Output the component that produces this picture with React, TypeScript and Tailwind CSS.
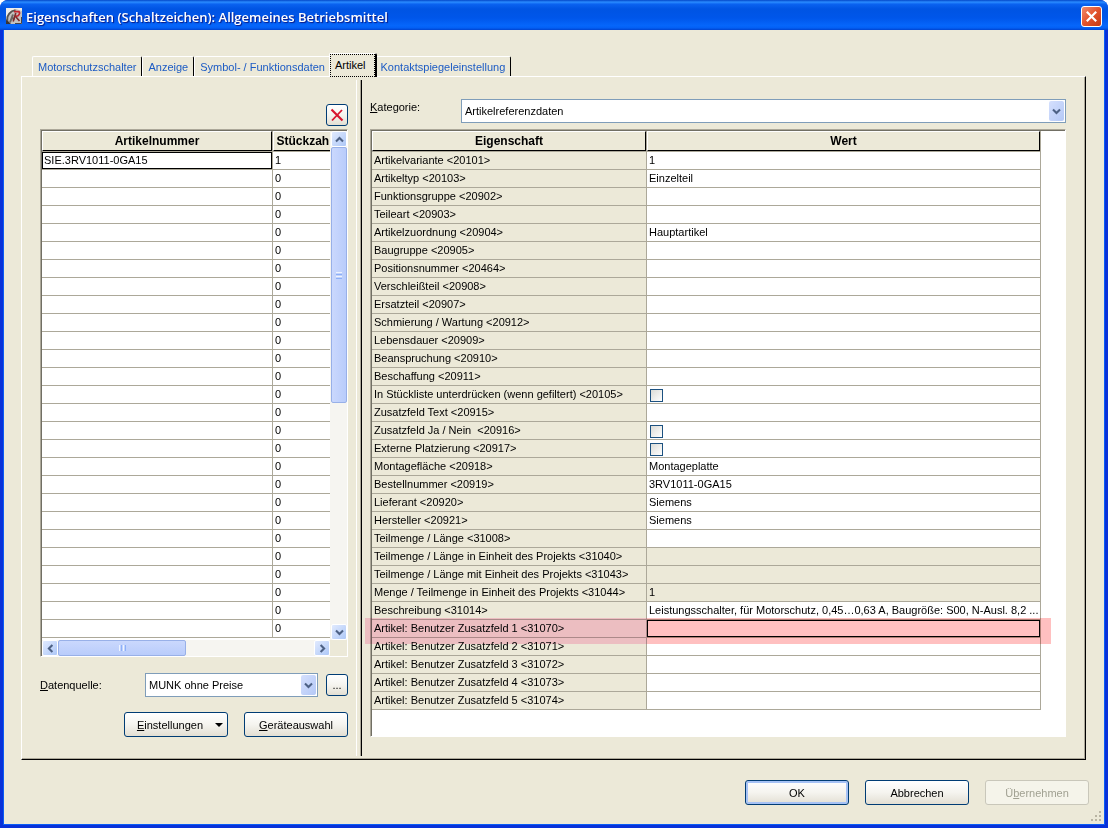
import { useState } from "react";

type Property = {
  label: string;
  value?: string;
  kind?: "check" | "readonly" | "selected";
};

const TABS = [
  "Motorschutzschalter",
  "Anzeige",
  "Symbol- / Funktionsdaten",
  "Artikel",
  "Kontaktspiegeleinstellung",
];

const PROPERTIES: Property[] = [
  { label: "Artikelvariante <20101>", value: "1" },
  { label: "Artikeltyp <20103>", value: "Einzelteil" },
  { label: "Funktionsgruppe <20902>" },
  { label: "Teileart <20903>" },
  { label: "Artikelzuordnung <20904>", value: "Hauptartikel" },
  { label: "Baugruppe <20905>" },
  { label: "Positionsnummer <20464>" },
  { label: "Verschleißteil <20908>" },
  { label: "Ersatzteil <20907>" },
  { label: "Schmierung / Wartung <20912>" },
  { label: "Lebensdauer <20909>" },
  { label: "Beanspruchung <20910>" },
  { label: "Beschaffung <20911>" },
  { label: "In Stückliste unterdrücken (wenn gefiltert) <20105>", kind: "check" },
  { label: "Zusatzfeld Text <20915>" },
  { label: "Zusatzfeld Ja / Nein  <20916>", kind: "check" },
  { label: "Externe Platzierung <20917>", kind: "check" },
  { label: "Montagefläche <20918>", value: "Montageplatte" },
  { label: "Bestellnummer <20919>", value: "3RV1011-0GA15" },
  { label: "Lieferant <20920>", value: "Siemens" },
  { label: "Hersteller <20921>", value: "Siemens" },
  { label: "Teilmenge / Länge <31008>" },
  { label: "Teilmenge / Länge in Einheit des Projekts <31040>", kind: "readonly" },
  { label: "Teilmenge / Länge mit Einheit des Projekts <31043>", kind: "readonly" },
  { label: "Menge / Teilmenge in Einheit des Projekts <31044>", value: "1", kind: "readonly" },
  {
    label: "Beschreibung <31014>",
    value: "Leistungsschalter, für Motorschutz, 0,45…0,63 A, Baugröße: S00, N-Ausl. 8,2 ...",
  },
  { label: "Artikel: Benutzer Zusatzfeld 1 <31070>", kind: "selected" },
  { label: "Artikel: Benutzer Zusatzfeld 2 <31071>" },
  { label: "Artikel: Benutzer Zusatzfeld 3 <31072>" },
  { label: "Artikel: Benutzer Zusatzfeld 4 <31073>" },
  { label: "Artikel: Benutzer Zusatzfeld 5 <31074>" },
];

const ARTICLES = Array.from({ length: 27 }, (_, i) => ({
  number: i === 0 ? "SIE.3RV1011-0GA15" : "",
  count: i === 0 ? "1" : "0",
}));

const BUTTON =
  "rounded-[3px] border border-[#003c74] bg-linear-to-b from-white via-[#f5f4ef] to-[#e3dfd3] text-center";
const SUNKEN =
  "border-t border-l border-t-[#aca899] border-l-[#aca899] border-r border-b border-r-white border-b-white";

function Chevron({ turn }: { turn: string }) {
  return (
    <svg viewBox="0 0 9 9" className={`h-[9px] w-[9px] ${turn}`} aria-hidden="true">
      <path d="M1 2.6 L4.5 6.1 L8 2.6" fill="none" stroke="#4d6185" strokeWidth="2.1" />
    </svg>
  );
}

function ScrollButton({ label, turn }: { label: string; turn: string }) {
  return (
    <button
      type="button"
      aria-label={label}
      className="flex size-4 shrink-0 items-center justify-center rounded-[2px] border border-white bg-linear-to-br from-[#e1eafe] to-[#aec8f7]"
    >
      <Chevron turn={turn} />
    </button>
  );
}

function HeaderCell({ children }: { children: string }) {
  return (
    <th className="border-r border-b border-[#aca899] p-0 text-[12px] font-bold">
      <div className="h-5 border-t border-r border-b border-l border-t-white border-r-black border-b-black border-l-white bg-[#ece9d8] text-center leading-[19px]">
        {children}
      </div>
    </th>
  );
}

function Select({ id, value }: { id: string; value: string }) {
  return (
    <div className="relative min-w-0 flex-1">
      <select
        id={id}
        className="block h-6 w-full appearance-none border border-[#7f9db9] bg-white pl-[3px] text-black outline-none"
      >
        <option>{value}</option>
      </select>
      <span className="pointer-events-none absolute top-0.5 right-0.5 flex h-5 w-[15px] items-center justify-center rounded-[2px] bg-linear-to-br from-[#d5e0fd] to-[#b4c8f6]">
        <Chevron turn="" />
      </span>
    </div>
  );
}

function AppIcon() {
  return (
    <svg viewBox="0 0 16 16" className="size-4" aria-hidden="true">
      <rect width="16" height="16" fill="#c4c1be" />
      <path d="M0 0H16V3L10 1L4 3.5L0 9Z" fill="#efedea" />
      <path d="M0 16V11L3 14L5 16Z" fill="#3a3534" />
      <path d="M1.5 13 C0.5 7 4.5 3 9.5 2.2" fill="none" stroke="#5a5552" strokeWidth="1.8" />
      <path d="M4 14.5 L7 6.5 M5.5 10.5 L9 10.5" fill="none" stroke="#6c6461" strokeWidth="2" />
      <path d="M8 3.6 H13 Q14.6 5.4 12 7.8 L8.5 8.6" fill="none" stroke="#c5232c" strokeWidth="1.6" />
      <path d="M7.2 13.5 L9.8 5 M10 9 L13.5 13" fill="none" stroke="#7c2a2c" strokeWidth="1.6" />
      <path d="M9 15.5 H15.5 V9" fill="none" stroke="#4a4543" strokeWidth="1" />
    </svg>
  );
}

function Tabs({ active, onSelect }: { active: string; onSelect: (tab: string) => void }) {
  return (
    <div role="tablist" className="flex h-6 items-end pl-[11px]">
      {TABS.map((tab) =>
        tab === active ? (
          <button
            key={tab}
            type="button"
            role="tab"
            aria-selected="true"
            className="z-10 -mx-0.5 h-6 rounded-t-[2px] border-t border-r-2 border-l border-t-white border-r-black border-l-white bg-[#ece9d8]"
          >
            <span className="block h-[23px] border border-dotted border-black pr-2 pl-1 leading-[21px]">{tab}</span>
          </button>
        ) : (
          <button
            key={tab}
            type="button"
            role="tab"
            aria-selected="false"
            onClick={() => onSelect(tab)}
            className="h-[21px] rounded-t-[2px] border-t border-r border-l border-t-white border-r-black border-l-white px-[5px] leading-5 text-[#1c5bc4]"
          >
            {tab}
          </button>
        ),
      )}
    </div>
  );
}

function ArticleList() {
  return (
    <div className={SUNKEN}>
      <div className="border-t border-l border-[#716f64]">
        <div className="flex">
          <div className="min-w-0 flex-1 overflow-hidden bg-white pb-0.5">
            <table className="w-[295px] table-fixed border-separate border-spacing-0">
              <colgroup>
                <col className="w-[231px]" />
                <col />
              </colgroup>
              <thead>
                <tr>
                  <HeaderCell>Artikelnummer</HeaderCell>
                  <HeaderCell>Stückzahl</HeaderCell>
                </tr>
              </thead>
              <tbody>
                {ARTICLES.map((article, i) => (
                  <tr key={i}>
                    <td className="h-[18px] border-r border-b border-[#aca899] p-0">
                      <div
                        className={
                          i === 0
                            ? "h-[17px] border border-black pl-px leading-[15px]"
                            : "h-[17px] pl-0.5 leading-[17px]"
                        }
                      >
                        {article.number}
                      </div>
                    </td>
                    <td className="h-[18px] border-r border-b border-[#aca899] p-0 pl-0.5 leading-[17px]">
                      {article.count}
                    </td>
                  </tr>
                ))}
              </tbody>
            </table>
          </div>
          <div className="flex w-[17px] flex-col border-l border-[#f6f5f1] bg-[#f6f5f1]">
            <ScrollButton label="Nach oben" turn="rotate-180" />
            <div className="flex-1">
              <div className="flex h-64 flex-col items-center justify-center gap-px rounded-[2px] border border-[#98b0e8] bg-linear-to-r from-[#cad8fd] to-[#b9ccfb]">
                <span className="h-px w-1.5 bg-[#eef4fe]" />
                <span className="h-px w-1.5 bg-[#8cb0f8]" />
                <span className="h-px w-1.5 bg-[#eef4fe]" />
                <span className="h-px w-1.5 bg-[#8cb0f8]" />
              </div>
            </div>
            <ScrollButton label="Nach unten" turn="" />
          </div>
        </div>
        <div className="flex">
          <div className="flex min-w-0 flex-1 bg-[#f6f5f1]">
            <ScrollButton label="Nach links" turn="rotate-90" />
            <div className="flex-1">
              <div className="flex h-4 w-32 items-center justify-center gap-px rounded-[2px] border border-[#98b0e8] bg-linear-to-b from-[#cad8fd] to-[#b9ccfb]">
                <span className="h-1.5 w-px bg-[#eef4fe]" />
                <span className="h-1.5 w-px bg-[#8cb0f8]" />
                <span className="h-1.5 w-px bg-[#eef4fe]" />
                <span className="h-1.5 w-px bg-[#8cb0f8]" />
              </div>
            </div>
            <ScrollButton label="Nach rechts" turn="-rotate-90" />
          </div>
          <div className="w-[17px]" />
        </div>
      </div>
    </div>
  );
}

function PropertyRow({ property }: { property: Property }) {
  const { label, value, kind } = property;
  const selected = kind === "selected";
  return (
    <tr className={selected ? "relative" : ""}>
      <td className="h-[18px] truncate border-r border-b border-[#aca899] bg-[#ece9d8] p-0 pl-0.5 leading-[17px] whitespace-pre">
        {kind === "check" ? <label htmlFor={label}>{label}</label> : label}
        {selected && (
          <span className="pointer-events-none absolute -top-0.5 -right-2.5 -left-[7px] h-[26px] bg-[linear-gradient(to_right,#ffd0e4_282px,#ffc0c0_282px)] mix-blend-multiply" />
        )}
      </td>
      <td
        className={
          kind === "readonly"
            ? "h-[18px] border-r border-b border-[#aca899] bg-[#ece9d8] p-0"
            : "h-[18px] border-r border-b border-[#aca899] p-0"
        }
      >
        {kind === "check" ? (
          <input
            id={label}
            type="checkbox"
            className="mt-0.5 ml-[3px] block size-[13px] appearance-none border border-[#1c5180] bg-linear-to-br from-[#dcdcd7] to-white"
          />
        ) : (
          <div
            className={
              selected
                ? "h-[17px] border border-black"
                : "h-[17px] truncate pl-0.5 leading-[17px]"
            }
          >
            {value}
          </div>
        )}
      </td>
    </tr>
  );
}

export default function App() {
  const [tab, setTab] = useState("Artikel");
  return (
    <div className="flex min-h-screen flex-col overflow-hidden rounded-t-lg bg-[#0831d9] font-['Liberation_Sans',Arial,sans-serif] text-[11px] leading-[14px] text-black">
      <header className="flex h-[30px] items-center gap-1 bg-[linear-gradient(to_bottom,#0347c8_0%,#2a8bff_7%,#0a62f0_14%,#0054e3_30%,#0056ea_60%,#0566fb_85%,#0360f5_93%,#0043cf_100%)] pt-0.5 pr-1.5 pl-1.5">
        <AppIcon />
        <h1 className="flex-1 pt-0.5 font-['Open_Sans',sans-serif] text-[13px] font-semibold text-white [text-shadow:1px_1px_1px_#0a1883]">
          Eigenschaften (Schaltzeichen): Allgemeines Betriebsmittel
        </h1>
        <button
          type="button"
          aria-label="Schließen"
          className="flex size-[21px] items-center justify-center rounded-[3px] border border-white bg-linear-to-br from-[#f0896a] via-[#e2522c] to-[#c63a12]"
        >
          <svg viewBox="0 0 13 13" className="size-[13px]" aria-hidden="true">
            <path d="M1.8 1.8 L11.2 11.2 M11.2 1.8 L1.8 11.2" stroke="#fff" strokeWidth="2.2" />
          </svg>
        </button>
      </header>

      <main className="mx-[3px] mb-[3px] flex flex-1 flex-col border-r border-b border-l border-[#0a5cf5] bg-[#ece9d8] pt-[23px] pr-[18px] pl-[17px]">
        <Tabs active={tab} onSelect={setTab} />

        <div className="-mt-px flex flex-1 border border-t-white border-r-black border-b-black border-l-white">
          <div className="flex flex-1 border-r border-b border-[#aca899]">
            <section className="flex w-[334px] shrink-0 flex-col pt-[27px] pr-2 pl-[18px]">
              <div className="mb-[3px] flex justify-end">
                <button type="button" aria-label="Löschen" className={`${BUTTON} flex size-[22px] items-center justify-center`}>
                  <svg viewBox="0 0 14 14" className="size-3.5" aria-hidden="true">
                    <path d="M1.5 1.5 L12.5 12.5" stroke="#d8142e" strokeWidth="2.2" />
                    <path d="M12 2 L2 12.5" stroke="#d8142e" strokeWidth="1.8" />
                  </svg>
                </button>
              </div>
              <ArticleList />
              <div className="mt-4 flex items-center">
                <label htmlFor="source" className="w-[105px]">
                  <u>D</u>atenquelle:
                </label>
                <Select id="source" value="MUNK ohne Preise" />
                <button type="button" className={`${BUTTON} ml-2 size-[22px]`}>
                  ...
                </button>
              </div>
              <div className="mt-[15px] flex justify-end gap-4">
                <button type="button" className={`${BUTTON} flex h-[25px] w-[104px] items-center justify-end gap-3 pr-1`}>
                  <span>
                    <u>E</u>instellungen
                  </span>
                  <svg viewBox="0 0 8 4" className="h-1 w-2" aria-hidden="true">
                    <path d="M0 0H8L4 4Z" fill="#000" />
                  </svg>
                </button>
                <button type="button" className={`${BUTTON} h-[25px] w-[104px]`}>
                  <u>G</u>eräteauswahl
                </button>
              </div>
            </section>

            <div className="mt-[3px] mb-0.5 flex w-1.5 shrink-0 justify-end border-r border-l border-r-black border-l-white">
              <div className="w-px bg-[#aca899]" />
            </div>

            <section className="flex min-w-0 flex-1 flex-col pt-[22px] pr-[18px] pb-[21px] pl-2">
              <div className="mb-1.5 flex">
                <label htmlFor="category" className="w-[91px] pt-px">
                  <u>K</u>ategorie:
                </label>
                <Select id="category" value="Artikelreferenzdaten" />
              </div>
              <div className={`${SUNKEN} flex flex-1 flex-col`}>
                <div className="flex-1 border-t border-l border-[#716f64] bg-white pr-6 pb-[26px]">
                  <table className="w-full table-fixed border-separate border-spacing-0">
                    <colgroup>
                      <col className="w-[275px]" />
                      <col />
                    </colgroup>
                    <thead>
                      <tr>
                        <HeaderCell>Eigenschaft</HeaderCell>
                        <HeaderCell>Wert</HeaderCell>
                      </tr>
                    </thead>
                    <tbody>
                      {PROPERTIES.map((property) => (
                        <PropertyRow key={property.label} property={property} />
                      ))}
                    </tbody>
                  </table>
                </div>
              </div>
            </section>
          </div>
        </div>

        <footer className="-mr-[3px] flex justify-end gap-4 pt-5">
          <button type="button" className={`${BUTTON} h-[25px] w-[104px] shadow-[inset_0_0_0_2px_#a6c2f5]`}>
            OK
          </button>
          <button type="button" className={`${BUTTON} h-[25px] w-[104px]`}>
            Abbrechen
          </button>
          <button
            type="button"
            disabled
            className="h-[25px] w-[104px] rounded-[3px] border border-[#c9c7ba] bg-[#f5f4ea] text-[#a1a192]"
          >
            Ü<u>b</u>ernehmen
          </button>
        </footer>
        <div className="-mr-4 flex h-[19px] items-end justify-end pb-0.5">
          <svg viewBox="0 0 12 12" className="size-3" aria-hidden="true">
            <path
              d="M9 1h2v2h-2zM5 5h2v2h-2zM9 5h2v2h-2zM1 9h2v2h-2zM5 9h2v2h-2zM9 9h2v2h-2z"
              fill="#b8b4a3"
            />
          </svg>
        </div>
      </main>
    </div>
  );
}
